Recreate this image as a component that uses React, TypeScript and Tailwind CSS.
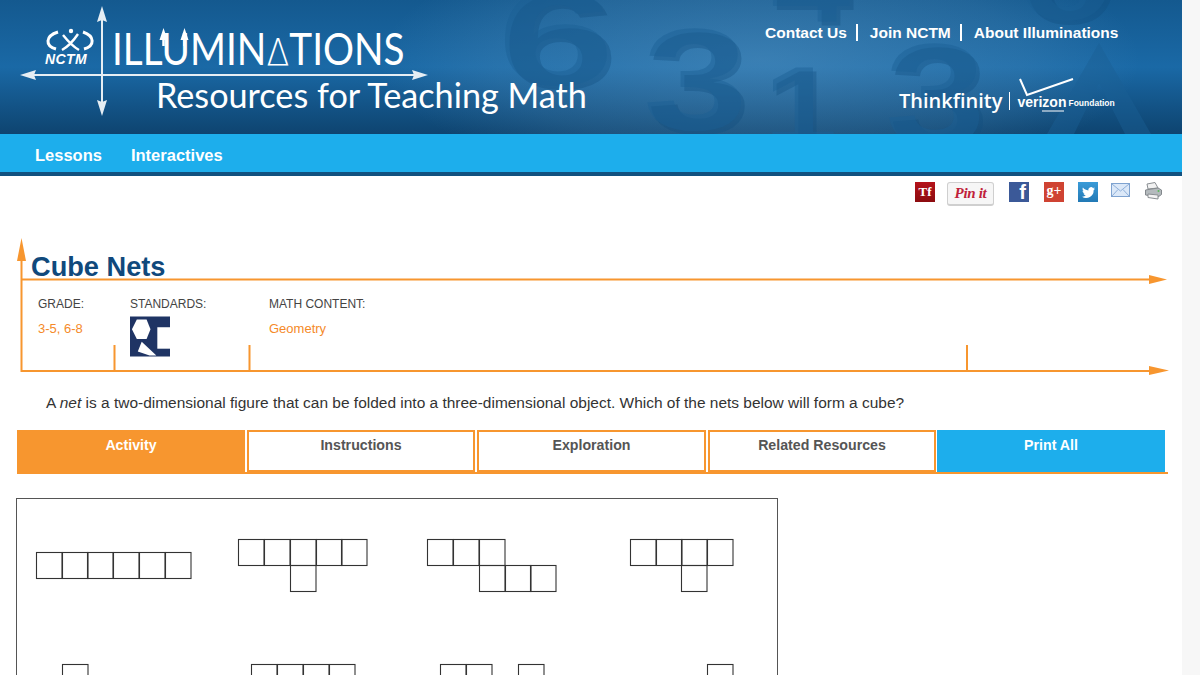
import React from 'react';

const sans = "font-['Liberation_Sans',Arial,sans-serif]";

const cells: [number, number][] = [
    [36, 552], [62, 552], [87, 552], [113, 552], [139, 552], [165, 552],
    [238, 539], [264, 539], [290, 539], [316, 539], [341, 539], [290, 565],
    [427, 539], [453, 539], [479, 539], [479, 565], [505, 565], [530, 565],
    [630, 539], [656, 539], [681, 539], [707, 539], [681, 565],
    [62, 664],
    [251, 664], [277, 664], [303, 664], [329, 664],
    [440, 664], [466, 664], [518, 664],
    [707, 664],
];

const tabs = [
    { label: 'Activity', box: 'w-[228px] bg-[#f7962f] text-white leading-[30px]' },
    { label: 'Instructions', box: 'ml-[2px] w-[228px] border-2 border-[#f7962f] bg-white text-[#555] leading-[26px]' },
    { label: 'Exploration', box: 'ml-[2px] w-[229px] border-2 border-[#f7962f] bg-white text-[#555] leading-[26px]' },
    { label: 'Related Resources', box: 'ml-[2px] w-[228px] border-2 border-[#f7962f] bg-white text-[#555] leading-[26px]' },
    { label: 'Print All', box: 'ml-px w-[228px] bg-[#1daeec] text-white leading-[30px]' },
];

const digit = "absolute leading-none text-[#1a5f95]/45 [text-shadow:3px_4px_0_rgba(18,78,125,0.35)]";

const HeaderArt = () => (
    <div aria-hidden className="absolute inset-0 overflow-hidden font-['Liberation_Sans',sans-serif] font-bold select-none">
        <div className="absolute inset-0 bg-[radial-gradient(ellipse_380px_130px_at_760px_60px,rgba(110,165,205,0.38),rgba(110,165,205,0.16)_70%,rgba(110,165,205,0)_100%)]" />
        <span className={`${digit} left-[518px] top-[-30px] text-[136px] scale-x-[1.55]`}>6</span>
        <span className={`${digit} left-[655px] top-[7px] text-[145px] scale-x-[1.3]`}>3</span>
        <span className={`${digit} left-[780px] top-[-72px] text-[110px] scale-x-[1.3]`}>4</span>
        <span className={`${digit} left-[770px] top-[50px] text-[110px] scale-x-[1.2]`}>1</span>
        <span className={`${digit} left-[895px] top-[22px] text-[145px] scale-x-[1.25]`}>3</span>
        <span className={`${digit} left-[1030px] top-[-90px] text-[130px] scale-x-[1.4]`}>0</span>
        <svg className="absolute left-[1047px] top-[43px]" width="104" height="91" viewBox="0 0 104 91" fill="none">
            <path d="M52 0 L104 91 H78 L52 40 L27 91 H0 Z" fill="#1a5f95" fillOpacity="0.45" />
        </svg>
    </div>
);

const LogoAxes = () => (
    <svg className="absolute left-0 top-0" width="440" height="134" viewBox="0 0 440 134" fill="none">
        <path d="M30 75 H420" stroke="#e6eef4" strokeWidth="2" />
        <path d="M20 75 L36 70 L34 75 L36 80 Z M428 75 L412 70 L414 75 L412 80 Z" fill="#e6eef4" />
        <path d="M102 16 V108" stroke="#e6eef4" strokeWidth="2" />
        <path d="M102 6 L97 22 L102 20 L107 22 Z M102 116 L97 100 L102 102 L107 100 Z" fill="#e6eef4" />
        <path d="M163.500 38 V46 M184.500 38 V46" stroke="#fff" strokeWidth="2.500" />
        <path d="M163.500 28 L159.500 40 H167.500 Z M184.500 28 L180.500 40 H188.500 Z" fill="#fff" />
        <path d="M58 32 C45 36 45 46 56 49 M83 32 C95 36 95 46 84 49" stroke="#fff" strokeWidth="3" />
        <path d="M63 35 C67 40 72 46 79 50 M78 34 C74 40 69 46 62 50" stroke="#fff" strokeWidth="2.400" />
        <circle cx="71" cy="31" r="2.200" fill="#fff" />
    </svg>
);

const SocialIcons = () => (
    <div className="flex items-start justify-end h-[62px] pt-[6px] pr-[20px]">
        <span className="flex h-[20px] w-[20px] items-center justify-center bg-gradient-to-b from-[#b5121a] to-[#8c0c10] font-['Liberation_Serif',serif] text-[13px] font-bold text-white">Tf</span>
        <span className="ml-[12px] flex h-[24px] w-[47px] items-center justify-center rounded-[3px] border border-b-2 border-[#cfcfcf] bg-[#f6f6f6] font-['Liberation_Serif',serif] text-[15px] font-bold italic tracking-[-0.3px] text-[#c0213a]">Pin it</span>
        <span className={`${sans} ml-[15px] flex h-[20px] w-[20px] items-end justify-end overflow-hidden bg-[#3b5998] pr-[3px] text-[20px] leading-[19px] font-bold text-white`}>f</span>
        <span className="ml-[15px] flex h-[20px] w-[20px] items-start justify-center bg-[#cf4332] font-['Liberation_Serif',serif] text-[14px] leading-[17px] font-bold text-white">g+</span>
        <span className="ml-[14px] flex h-[20px] w-[20px] items-center justify-center bg-gradient-to-b from-[#3a9bd8] to-[#2279b5]">
            <svg width="13" height="11" viewBox="0 0 24 20" fill="#fff">
                <path d="M24 2.400c-.9.4-1.800.7-2.800.8 1-.6 1.800-1.600 2.200-2.700-1 .6-2 1-3.100 1.200A4.900 4.900 0 0 0 11.900 6.200C7.800 6 4.200 4.100 1.700.9.400 3.200 1 6.100 3.200 7.500c-.8 0-1.600-.2-2.200-.6 0 2.400 1.700 4.400 3.900 4.900-.7.200-1.500.2-2.200.1.600 2 2.400 3.400 4.600 3.400A9.900 9.900 0 0 1 0 17.800 14 14 0 0 0 21.500 5.400c1-.7 1.800-1.600 2.500-3z" />
            </svg>
        </span>
        <svg className="ml-[13px] mt-[1px]" width="19" height="15" viewBox="0 0 19 15" fill="none">
            <rect x="0.500" y="0.500" width="18" height="13" fill="#dbe8f8" stroke="#7fa3d0" />
            <path d="M1 1 L9.500 8 L18 1 M1 13 L7 6.500 M18 13 L12 6.500" stroke="#8fb0da" />
        </svg>
        <svg className="ml-[15px]" width="17" height="18" viewBox="0 0 17 18" fill="none">
            <path d="M3 7 L2 2 L10 0.500 L13 6 Z" fill="#f2f2f2" stroke="#8a8f93" />
            <path d="M0.500 8 L13 6 L16.500 8 V12.500 L13 15 L0.500 13 Z" fill="#b4babd" stroke="#83888c" />
            <path d="M3 12 L13 13 V17 L3 15.500 Z" fill="#f4f4f4" stroke="#8a8f93" />
            <circle cx="13.500" cy="9" r="1" fill="#5cb85c" />
        </svg>
    </div>
);

const MetaColumn = ({ label, className, children }: { label: string; className: string; children: React.ReactNode }) => (
    <div className={className}>
        <div className="text-[12px] leading-[13px] text-[#444]">{label}</div>
        <div className="mt-[11px] text-[13px] leading-[14px] text-[#f58a29]">{children}</div>
    </div>
);

const App: React.FC = () => {
    return (
        <div className={`${sans} flex h-[675px] w-[1200px] overflow-hidden bg-[#f7f7f7]`}>
            <div className="w-[1182px] h-[675px] bg-white overflow-hidden">
                <header className="relative h-[134px] bg-gradient-to-b from-[#14598f] via-[#1a69a6] to-[#0e4470] overflow-hidden">
                    <HeaderArt />
                    <LogoAxes />
                    <div className="relative flex h-full">
                        <div className="w-[112px] pl-[45px] pt-[52px] text-[14px] leading-none font-bold italic tracking-[0.4px] text-white">NCTM</div>
                        <div className="w-[653px]">
                            <div className="mt-[26px] h-[44px] w-[350px] origin-left scale-x-[0.88] font-['Lato',sans-serif] text-[44px] leading-[44px] whitespace-nowrap text-white">
                                ILLUMIN<span className="font-['DejaVu_Sans',sans-serif] text-[38px] font-extralight">Δ</span>TIONS
                            </div>
                            <div className="ml-[44px] mt-[2px] font-['Lato',sans-serif] text-[34.200px] leading-[46px] whitespace-nowrap text-white">Resources for Teaching Math</div>
                        </div>
                        <div className="flex-1">
                            <div className="mt-[24px] flex h-[17px] items-center text-[15.500px] leading-none font-bold whitespace-nowrap text-white">
                                <span>Contact Us</span>
                                <span className="ml-[9px] mr-[12px] h-[17px] w-[2px] bg-white" />
                                <span>Join NCTM</span>
                                <span className="ml-[9px] mr-[12px] h-[17px] w-[2px] bg-white" />
                                <span>About Illuminations</span>
                            </div>
                            <div className="relative ml-[134px] mt-[47px] flex items-center whitespace-nowrap text-white">
                                <span className="font-['Open_Sans',sans-serif] text-[20px] leading-[26px] font-semibold">Thinkfinity</span>
                                <span className="mx-[7px] h-[18px] w-px bg-white" />
                                <span className="mt-[2px] text-[14px] leading-none font-bold">verizon</span>
                                <span className="ml-[2px] mt-[5px] text-[8.500px] leading-none font-bold">Foundation</span>
                                <svg className="absolute left-[119px] top-[-10px]" width="58" height="42" viewBox="0 0 58 42" fill="none">
                                    <path d="M2 1 L9 17 L55 1" stroke="#fff" strokeWidth="2" />
                                    <path d="M24 33 H46" stroke="#fff" strokeWidth="1" />
                                </svg>
                            </div>
                        </div>
                    </div>
                </header>

                <nav className="flex h-[42px] items-center gap-[29px] border-b-4 border-[#12517f] bg-[#1daeec] pl-[35px] pt-[5px] text-[16.500px] font-bold text-white">
                    <a>Lessons</a>
                    <a>Interactives</a>
                </nav>

                <SocialIcons />

                <section className="relative h-[192px]">
                    <svg className="absolute left-0 top-0" width="1182" height="150" viewBox="0 0 1182 150" fill="none">
                        <path d="M21.500 12 V133 H1150 M21.500 41.500 H1150" stroke="#f7962f" strokeWidth="2" />
                        <path d="M21.500 0 L17 23 H26 Z M1167 41.500 L1149 37 V46 Z M1169 132.500 L1149 128 V137 Z" fill="#f7962f" />
                        <path d="M114.500 107 V133 M249.500 107 V133 M967 107 V133" stroke="#f7962f" strokeWidth="2" />
                    </svg>
                    <h1 className="relative pl-[31px] pt-[14px] text-[27.200px] leading-[30px] font-bold text-[#10497c]">Cube Nets</h1>
                    <div className="relative mt-[16px] flex">
                        <MetaColumn label="GRADE:" className="ml-[38px] w-[92px]">3-5, 6-8</MetaColumn>
                        <div className="w-[139px]">
                            <div className="text-[12px] leading-[13px] text-[#444]">STANDARDS:</div>
                            <svg className="mt-[5px]" width="40" height="41" viewBox="0 0 41 41">
                                <rect width="41" height="41" fill="#1f3464" />
                                <path d="M2 13 L7 3 H17 L21 13 L17 23 H7 Z" fill="#fff" />
                                <path d="M28 11 H41 V33 H28 Z" fill="#fff" />
                                <path d="M12 26 L27 40 H20 L8 36 Z" fill="#fff" />
                            </svg>
                        </div>
                        <MetaColumn label="MATH CONTENT:" className="w-[200px]">Geometry</MetaColumn>
                    </div>
                    <p className="relative ml-[46px] mt-[36px] text-[15.470px] leading-[20px] whitespace-nowrap text-[#333]">
                        A <i>net</i> is a two-dimensional figure that can be folded into a three-dimensional object. Which of the nets below will form a cube?
                    </p>
                </section>

                <div className="ml-[17px] flex w-[1151px] h-[44px] border-b-2 border-[#f7962f]">
                    {tabs.map((tab) => (
                        <div key={tab.label} className={`${tab.box} h-[42px] text-center text-[14.200px] font-bold`}>
                            {tab.label}
                        </div>
                    ))}
                </div>

                <div className="relative ml-[16px] mt-[24px] h-[200px] w-[762px] border border-b-0 border-[#555]">
                    <svg className="absolute left-[-17px] top-[-499px]" width="800" height="675" viewBox="0 0 800 675" fill="none">
                        {cells.map(([x, y], i) => (
                            <rect key={i} x={x + 0.5} y={y + 0.5} width={25.5} height={26} stroke="#333" strokeWidth="1.100" />
                        ))}
                    </svg>
                </div>
            </div>
        </div>
    );
};

export default App;
